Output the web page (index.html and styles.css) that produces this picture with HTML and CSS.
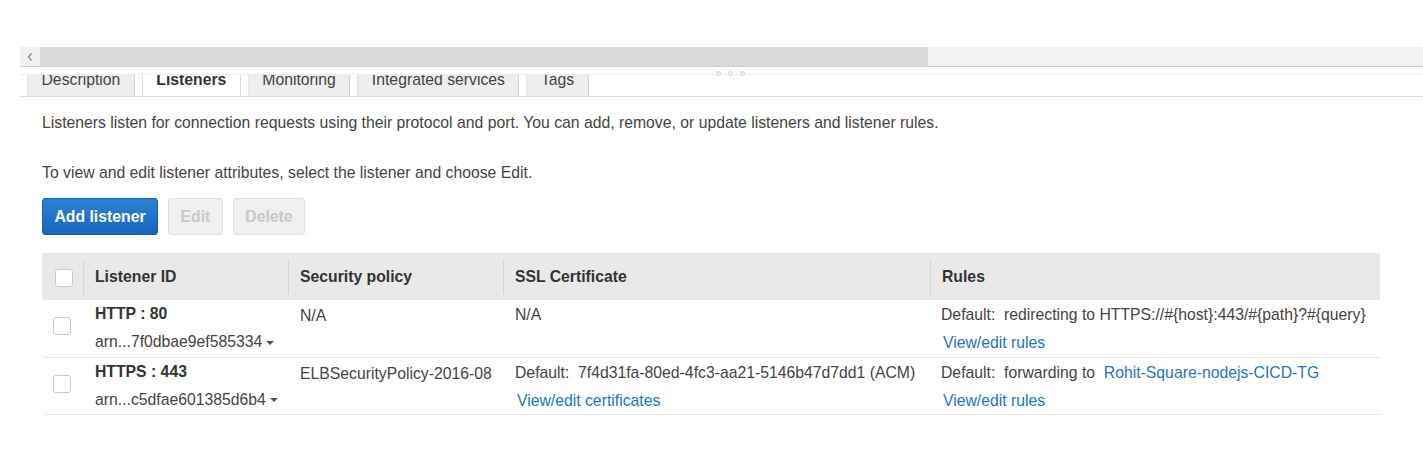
FILE: index.html
```html
<!DOCTYPE html>
<html>
<head>
<meta charset="utf-8">
<title>Listeners</title>
<link rel="stylesheet" href="styles.css">
</head>
<body>
<div class="hscroll">
  <div class="hs-btn">
    <svg width="8" height="10" viewBox="0 0 8 10"><polyline points="5.5,1.5 2.5,5 5.5,8.5" fill="none" stroke="#8a8a8a" stroke-width="1.3"/></svg>
  </div>
  <div class="hs-thumb"></div>
  <div class="hs-track"></div>
</div>

<div class="panel">
  <div class="grip"><span></span><span></span><span></span></div>
  <div class="tabbar">
    <div class="tab">Description</div>
    <div class="tab active">Listeners</div>
    <div class="tab">Monitoring</div>
    <div class="tab">Integrated services</div>
    <div class="tab">Tags</div>
  </div>

  <div class="content">
    <p class="intro">Listeners listen for connection requests using their protocol and port. You can add, remove, or update listeners and listener rules.</p>
    <p class="intro second">To view and edit listener attributes, select the listener and choose Edit.</p>

    <div class="actions">
      <button class="btn primary">Add listener</button>
      <button class="btn disabled">Edit</button>
      <button class="btn disabled">Delete</button>
    </div>

    <table class="grid">
      <colgroup>
        <col class="c-check"><col class="c-id"><col class="c-policy"><col class="c-cert"><col class="c-rules">
      </colgroup>
      <thead>
        <tr>
          <th class="th-check"><span class="cb"></span></th>
          <th class="sep">Listener ID</th>
          <th class="sep">Security policy</th>
          <th class="sep">SSL Certificate</th>
          <th class="sep">Rules</th>
        </tr>
      </thead>
      <tbody>
        <tr>
          <td class="td-check"><span class="cb"></span></td>
          <td>
            <div class="line strong">HTTP : 80</div>
            <div class="line">arn...7f0dbae9ef585334<span class="caret"></span></div>
          </td>
          <td class="policy"><div class="line">N/A</div></td>
          <td class="cert"><div class="line">N/A</div></td>
          <td class="rules">
            <div class="line">Default:&nbsp; redirecting to HTTPS://#{host}:443/#{path}?#{query}</div>
            <div class="line"><a class="lnk" href="#">View/edit rules</a></div>
          </td>
        </tr>
        <tr>
          <td class="td-check"><span class="cb"></span></td>
          <td>
            <div class="line strong">HTTPS : 443</div>
            <div class="line">arn...c5dfae601385d6b4<span class="caret"></span></div>
          </td>
          <td class="policy"><div class="line">ELBSecurityPolicy-2016-08</div></td>
          <td class="cert">
            <div class="line">Default:&nbsp; 7f4d31fa-80ed-4fc3-aa21-5146b47d7dd1 (ACM)</div>
            <div class="line"><a class="lnk" href="#">View/edit certificates</a></div>
          </td>
          <td class="rules">
            <div class="line">Default:&nbsp; forwarding to&nbsp; <a class="inl" href="#">Rohit-Square-nodejs-CICD-TG</a></div>
            <div class="line"><a class="lnk" href="#">View/edit rules</a></div>
          </td>
        </tr>
      </tbody>
    </table>
  </div>
</div>
</body>
</html>
```

FILE: styles.css
```css
* { box-sizing: border-box; }

body {
  margin: 0;
  font-family: "Liberation Sans", Arial, sans-serif;
  font-size: 15.75px;
  color: #444;
  background: #fff;
}

/* horizontal scrollbar at top */
.hscroll {
  display: flex;
  margin: 47px 0 0 20px;
  height: 20px;
  border-bottom: 1px solid #cfcfcf;
}
.hs-btn {
  width: 20px;
  background: #f1f1f1;
  display: flex;
  align-items: center;
  justify-content: center;
}
.hs-thumb {
  width: 888px;
  background: #dbdbdb;
}
.hs-track {
  flex: 1;
  background: #f3f3f3;
}

/* panel with tabs */
.panel {
  position: relative;
  margin: 7px 0 0 20px;
}
.grip {
  position: absolute;
  left: 696px;
  top: -3px;
  display: flex;
  gap: 7px;
}
.grip span {
  width: 5px;
  height: 5px;
  border-radius: 50%;
  border: 1px solid #d4d4d4;
  background: #f4f4f4;
}
.tabbar {
  display: flex;
  align-items: flex-end;
  height: 23px;
  border-top: 1px solid #ececec;
  border-bottom: 1px solid #dadada;
  overflow: hidden;
  padding-left: 7px;
}
.tab {
  flex: none;
  height: 26px;
  padding: 1px 13.5px 0;
  line-height: 18px;
  margin-right: 7px;
  background: #eeeeee;
  border-left: 1px solid #e6e6e6;
  border-right: 1px solid #d2d2d2;
  color: #444;
  white-space: nowrap;
}
.tab.active {
  background: #fff;
  border-left: 1px solid #d8d8d8;
  border-right: 1px solid #d8d8d8;
  font-weight: bold;
  color: #333;
}

/* content */
.content {
  padding: 0 22px;
}
.intro {
  margin: 17px 0 0;
  line-height: 18px;
}
.intro.second {
  margin-top: 32px;
}

.actions {
  display: flex;
  gap: 10px;
  margin-top: 16px;
}
.btn {
  font-family: inherit;
  font-size: 15.75px;
  font-weight: bold;
  height: 37px;
  padding: 0 11.5px;
  border-radius: 3px;
  border: 1px solid #ddd;
}
.btn.primary {
  color: #fff;
  background: linear-gradient(#2b83d7, #1864be);
  border-color: #1a5eae;
}
.btn.disabled {
  color: #c8c8c8;
  background: #f0f0f0;
  border-color: #e0e0e0;
}

/* table */
.grid {
  margin-top: 18px;
  width: 1338px;
  border-collapse: collapse;
  table-layout: fixed;
}
.c-check { width: 41px; }
.c-id { width: 205px; }
.c-policy { width: 215px; }
.c-cert { width: 427px; }
.c-rules { width: 450px; }

.grid th {
  height: 47px;
  padding: 0 12px;
  text-align: left;
  font-weight: bold;
  color: #333;
  background: #e9e9e9;
  vertical-align: middle;
}
.grid th.sep {
  background: linear-gradient(#d5d5d5, #d5d5d5) left center / 1px 34px no-repeat, #e9e9e9;
}
.grid th.th-check {
  padding: 2px 0 0 13px;
}

.grid td {
  height: 57px;
  padding: 0 12px;
  vertical-align: top;
  border-bottom: 1px solid #e6e6e6;
  white-space: nowrap;
}
.grid td.td-check {
  padding: 17px 0 0 11px;
}
.grid td.policy {
  padding-top: 2px;
}
.grid td.cert {
  padding-top: 1px;
}
.grid td.rules {
  padding-left: 11px;
  padding-top: 1px;
}
.line {
  line-height: 28px;
  height: 28px;
}
.line:last-child {
  height: 27px;
}
.line.strong {
  font-weight: bold;
  color: #333;
}

.cb {
  display: block;
  width: 18px;
  height: 18px;
  border: 1px solid #c9c9c9;
  border-radius: 3px;
  background: #fff;
}

.caret {
  display: inline-block;
  vertical-align: middle;
  margin-left: 4px;
  width: 0;
  height: 0;
  border-left: 4px solid transparent;
  border-right: 4px solid transparent;
  border-top: 4px solid #555;
}

a { text-decoration: none; }
.lnk {
  color: #1d74c8;
  margin-left: 2px;
}
.inl {
  color: #1d74c8;
}
```
